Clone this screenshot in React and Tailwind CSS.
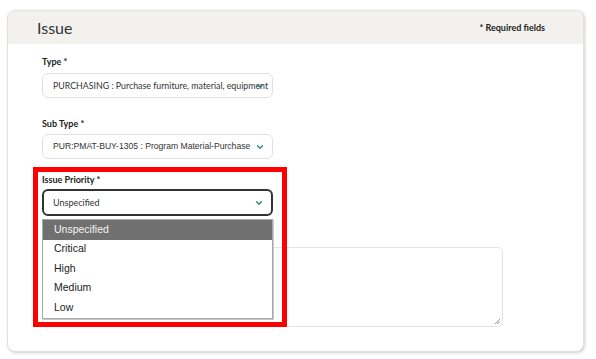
import React from "react";

const Chevron = () => (
  <svg
    width="10"
    height="10"
    viewBox="0 0 24 24"
    fill="none"
    stroke="#1d8a78"
    strokeWidth="3"
    strokeLinecap="round"
    strokeLinejoin="round"
    className="absolute right-[7px] top-1/2 -translate-y-1/2"
  >
    <path d="m6 9 6 6 6-6" />
  </svg>
);

const Label = ({ children }) => (
  <div className="text-[9px] leading-[12px] font-bold text-[#222] font-['Lato',sans-serif]">
    {children}
  </div>
);

export default function App() {
  const items = ["Unspecified", "Critical", "High", "Medium", "Low"];
  return (
    <div className="relative w-[596px] h-[359px] bg-white pt-[10px] pl-[7px] overflow-hidden">
      <div className="w-[577px] h-[342px] rounded-[8px] border border-[#e2e2e2] bg-white shadow-[1px_1px_3px_rgba(60,60,90,0.25)] overflow-hidden">
        <div className="h-[33px] bg-[#f2f1ee] flex items-center justify-between pl-[29px] pr-[38px]">
          <span className="text-[16px] text-[#333] font-['Lato',sans-serif]">Issue</span>
          <span className="text-[9px] font-bold text-[#222] font-['Lato',sans-serif]">* Required fields</span>
        </div>
        <div className="pl-[34px] pt-[12px]">
          <Label>Type *</Label>
          <div className="relative mt-[5px] w-[231px] h-[25px] rounded-[6px] border border-[#e0e0e0] bg-white flex items-center pl-[10px] overflow-hidden">
            <span className="whitespace-nowrap text-[8.8px] text-[#333] font-['Lato',sans-serif]">
              PURCHASING : Purchase furniture, material, equipment
            </span>
            <Chevron />
          </div>

          <div className="mt-[20px]">
            <Label>Sub Type *</Label>
          </div>
          <div className="relative mt-[4px] w-[231px] h-[25px] rounded-[6px] border border-[#e0e0e0] bg-white flex items-center pl-[10px]">
            <span className="whitespace-nowrap text-[8.6px] text-[#333] font-['Liberation_Sans',sans-serif]">
              PUR:PMAT-BUY-1305 : Program Material-Purchase
            </span>
            <Chevron />
          </div>

          <div className="mt-[15px]">
            <Label>Issue Priority *</Label>
          </div>
          <div className="relative mt-[3px] w-[231px]">
            <div className="relative h-[27px] rounded-[6px] border-2 border-[#333] bg-white flex items-center pl-[9px]">
              <span className="text-[9px] text-[#333] font-['Lato',sans-serif]">Unspecified</span>
              <Chevron />
            </div>
          </div>

          <div className="mt-[12px] h-[12px]" />
          <div className="relative mt-[7px] w-[461px] h-[80px] rounded-[5px] border border-[#e3e3e3] bg-white">
            <svg width="7" height="7" viewBox="0 0 7 7" className="absolute right-[1px] bottom-[1px]">
              <path d="M6 1 L1 6 M6 3.5 L3.5 6" stroke="#777" strokeWidth="0.8" />
            </svg>
          </div>
        </div>
      </div>

      {/* Open dropdown list */}
      <div className="absolute left-[42px] top-[219px] w-[231px] bg-white border border-[#a9a9a9] shadow-[1px_1px_0_#c8c8c8] font-['Liberation_Sans',sans-serif] text-[10.5px]">
        {items.map((it, i) => (
          <div
            key={it}
            className={
              i === 0
                ? "h-[19.5px] flex items-center pl-[11px] bg-[#707070] text-[#f4f4f4]"
                : "h-[19.5px] flex items-center pl-[11px] text-[#222]"
            }
          >
            {it}
          </div>
        ))}
      </div>

      {/* Red annotation box */}
      <div className="absolute left-[33px] top-[167px] w-[254px] h-[160px] border-[5px] border-[#ff0000] pointer-events-none" />
    </div>
  );
}
